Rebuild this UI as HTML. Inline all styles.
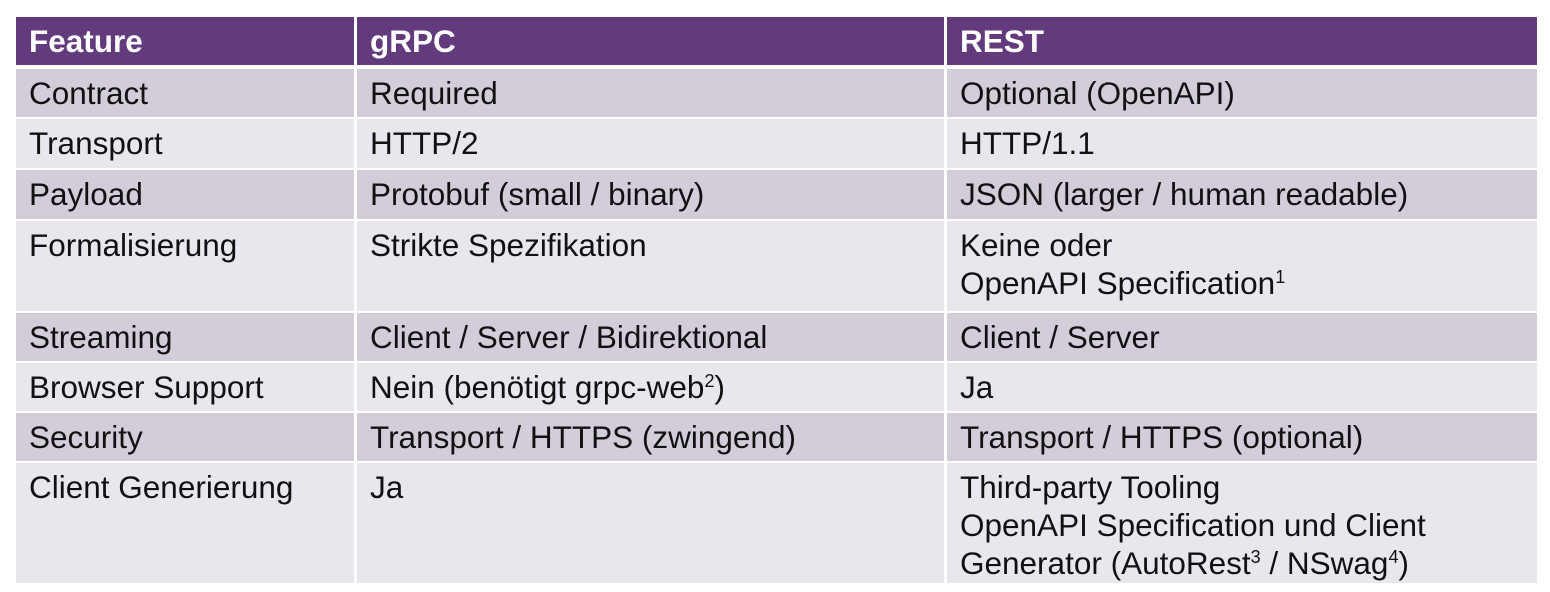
<!DOCTYPE html>
<html><head><meta charset="utf-8"><style>
body{margin:0;background:#fff;width:1550px;height:592px;overflow:hidden;font-family:"Liberation Sans",Arial,sans-serif}
table{position:absolute;left:16px;top:17px;border-collapse:separate;border-spacing:0;width:1521px}
td,th{padding:0 13px;font-size:31.5px;color:#111;text-align:left;vertical-align:top;border-right:3px solid #fff;border-bottom:2px solid #fff;line-height:38px;padding-top:5px;box-sizing:border-box;white-space:nowrap}
td:last-child,th:last-child{border-right:0}
th{background:#633a7c;color:#fff;font-weight:bold;height:52px;border-bottom:4px solid #fff;line-height:42px;padding-top:3px}
tr.d td{background:#d3cdda}
tr.l td{background:#e9e6ed}
sup{font-size:18px;line-height:0;vertical-align:11px}
</style></head><body>
<table>
<colgroup><col style="width:341px"><col style="width:590px"><col style="width:590px"></colgroup>
<tr><th>Feature</th><th>gRPC</th><th>REST</th></tr>
<tr class="d" style="height:50px"><td>Contract</td><td>Required</td><td>Optional (OpenAPI)</td></tr>
<tr class="l" style="height:51px"><td>Transport</td><td>HTTP/2</td><td>HTTP/1.1</td></tr>
<tr class="d" style="height:51px"><td>Payload</td><td>Protobuf (small / binary)</td><td>JSON (larger / human readable)</td></tr>
<tr class="l" style="height:92px"><td>Formalisierung</td><td>Strikte Spezifikation</td><td>Keine oder<br>OpenAPI Specification<sup>1</sup></td></tr>
<tr class="d" style="height:50px"><td>Streaming</td><td>Client / Server / Bidirektional</td><td>Client / Server</td></tr>
<tr class="l" style="height:50px"><td>Browser Support</td><td>Nein (benötigt grpc-web<sup>2</sup>)</td><td>Ja</td></tr>
<tr class="d" style="height:50px"><td>Security</td><td>Transport / HTTPS (zwingend)</td><td>Transport / HTTPS (optional)</td></tr>
<tr class="l" style="height:122px"><td>Client Generierung</td><td>Ja</td><td>Third-party Tooling<br>OpenAPI Specification und Client<br>Generator (AutoRest<sup>3</sup> / NSwag<sup>4</sup>)</td></tr>
</table>
</body></html>
